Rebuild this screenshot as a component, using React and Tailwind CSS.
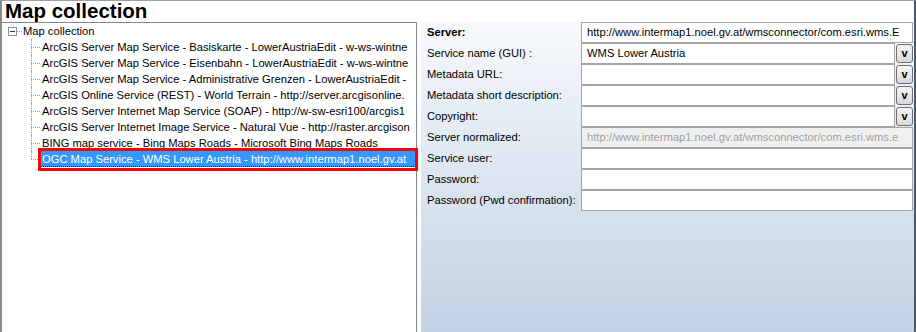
import React from "react";

const items = [
  "ArcGIS Server Map Service - Basiskarte - LowerAustriaEdit - w-ws-wintne",
  "ArcGIS Server Map Service - Eisenbahn - LowerAustriaEdit - w-ws-wintne",
  "ArcGIS Server Map Service - Administrative Grenzen - LowerAustriaEdit -",
  "ArcGIS Online Service (REST) - World Terrain - http://server.arcgisonline.",
  "ArcGIS Server Internet Map Service (SOAP) - http://w-sw-esri100/arcgis1",
  "ArcGIS Server Internet Image Service - Natural Vue - http://raster.arcgison",
  "BING map service - Bing Maps Roads - Microsoft Bing Maps Roads",
];

const rows = [
  { label: "Server:", bold: true, value: "http://www.intermap1.noel.gv.at/wmsconnector/com.esri.wms.E" },
  { label: "Service name (GUI) :", value: "WMS Lower Austria", dd: true },
  { label: "Metadata URL:", value: "", dd: true },
  { label: "Metadata short description:", value: "", dd: true },
  { label: "Copyright:", value: "", dd: true },
  { label: "Server normalized:", value: "http://www.intermap1.noel.gv.at/wmsconnector/com.esri.wms.e", disabled: true },
  { label: "Service user:", value: "" },
  { label: "Password:", value: "" },
  { label: "Password (Pwd confirmation):", value: "" },
];

function Connector({ last }) {
  return (
    <div className="relative w-[10px] h-[16px] shrink-0">
      <div
        className={
          "absolute left-0 top-0 border-l border-dotted border-[#a0a0a0] " +
          (last ? "h-[8px]" : "h-[16px]")
        }
      />
      <div className="absolute left-0 top-[8px] w-[9px] border-t border-dotted border-[#a0a0a0]" />
    </div>
  );
}

export default function App() {
  return (
    <div
      className="relative w-[916px] h-[332px] flex flex-col bg-white border-t border-[#a0a0a0] border-l-2 border-l-[#8c8c8c] border-r-2 border-r-[#4d5a6b] overflow-hidden"
      style={{ fontFamily: '"Liberation Sans", Arial, sans-serif' }}
    >
      <div className="h-[21px] flex items-center pl-[3px] text-[20.5px] font-bold leading-none text-black">
        Map collection
      </div>
      <div className="flex flex-1 min-h-0">
        {/* Tree */}
        <div className="w-[415px] shrink-0 border-t border-r border-[#828790] bg-white text-[11.2px] text-black leading-[16px] overflow-hidden">
          <div className="flex items-center h-[16px]">
            <div className="w-[6px]" />
            <div className="w-[9px] h-[9px] border border-[#919191] bg-white flex items-center justify-center shrink-0">
              <div className="w-[5px] h-px bg-[#1f3a8a]" />
            </div>
            <div className="w-[5px] border-t border-dotted border-[#a0a0a0]" />
            <span className="pl-[1px]">Map collection</span>
          </div>
          {items.map((t, i) => (
            <div key={i} className="flex items-center h-[16px]">
              <div className="w-[29px] shrink-0" />
              <Connector />
              <span className="pl-[1px] whitespace-nowrap">{t}</span>
            </div>
          ))}
          <div className="flex items-center h-[16px]">
            <div className="w-[29px] shrink-0" />
            <Connector last />
            <div className="flex-1 h-[16px] bg-[#3399ff] text-white whitespace-nowrap pl-[1px] border-b border-dotted border-[#0b2a55]">
              OGC Map Service - WMS Lower Austria - http://www.intermap1.noel.gv.at
            </div>
          </div>
        </div>
        <div className="w-[4px] shrink-0 bg-white" />
        {/* Right panel */}
        <div className="flex-1 min-w-0 bg-gradient-to-b from-[#f7f9fc] to-[#c2d2e5] pl-[6px] pr-[1px] text-[11.2px] text-black">
          {rows.map((r, i) => (
            <div key={i} className="flex h-[21px] items-stretch">
              <div className={"w-[154px] shrink-0 flex items-center whitespace-nowrap " + (r.bold ? "font-bold" : "")}>{r.label}</div>
              <div className="flex-1 min-w-0 flex">
                <div
                  className={
                    "flex-1 min-w-0 border border-[#a5a5a5] flex items-center pl-[5px] whitespace-nowrap overflow-hidden " +
                    (r.disabled ? "bg-[#f0f0f0] text-[#a0a0a0]" : "bg-white text-black")
                  }
                >
                  {r.value}
                </div>
                {r.dd && (
                  <div className="w-[17px] shrink-0 ml-[1px] my-[1px] rounded-[3px] border border-[#707070] bg-gradient-to-b from-[#f4f4f4] to-[#d9d9d9] flex items-center justify-center text-[11px] font-bold leading-none">
                    v
                  </div>
                )}
              </div>
            </div>
          ))}
        </div>
      </div>
      <div className="absolute left-[36px] top-[147px] w-[380px] h-[23px] border-[3px] border-[#ff0000] pointer-events-none" />
    </div>
  );
}
